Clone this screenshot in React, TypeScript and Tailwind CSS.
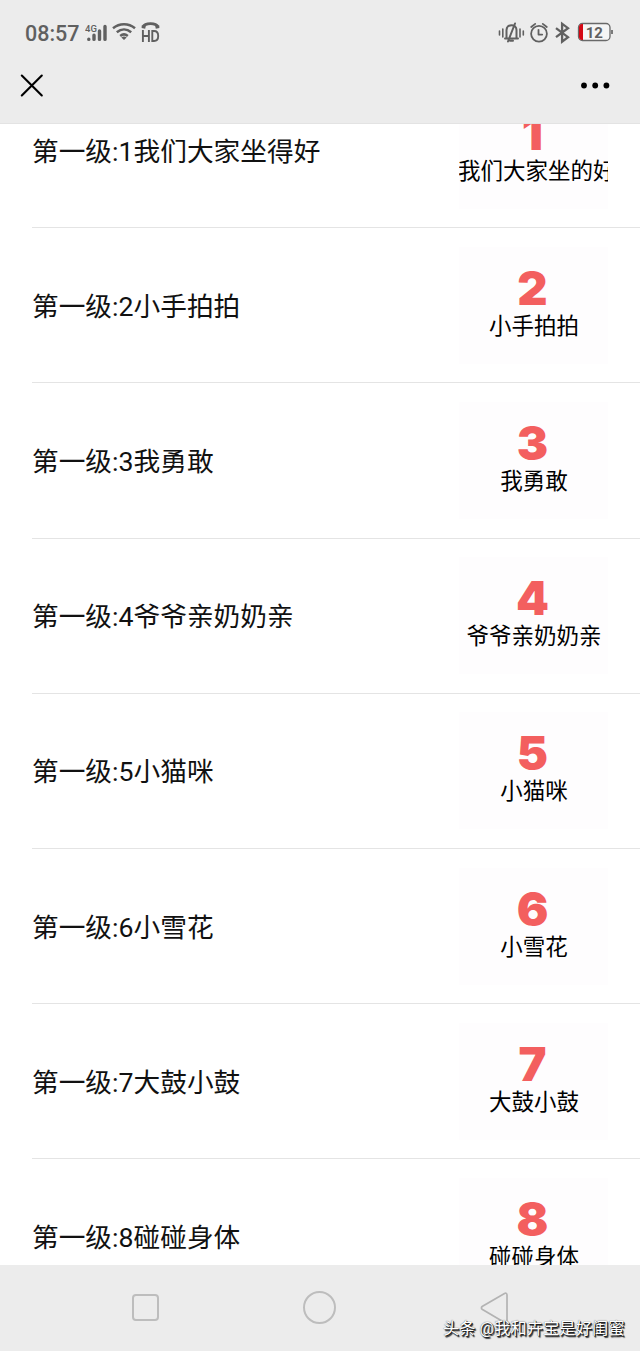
const lessons = [
  { title: '我们大家坐得好', cover: '我们大家坐的好' },
  { title: '小手拍拍', cover: '小手拍拍' },
  { title: '我勇敢', cover: '我勇敢' },
  { title: '爷爷亲奶奶亲', cover: '爷爷亲奶奶亲' },
  { title: '小猫咪', cover: '小猫咪' },
  { title: '小雪花', cover: '小雪花' },
  { title: '大鼓小鼓', cover: '大鼓小鼓' },
  { title: '碰碰身体', cover: '碰碰身体' },
];

function StatusBar() {
  return (
    <div className="flex h-[48px] items-start justify-between pt-[18px] pl-[25px] pr-[27px] text-[#606060]">
      <div className="flex h-[30px] items-center">
        <span className="w-[60px] whitespace-nowrap pt-[2px] font-['Roboto'] text-[21.5px] font-medium leading-[30px]">08:57</span>
        <svg width="76" height="30" viewBox="85 18 76 30" fill="none" stroke="currentColor">
          <text x="85" y="31.500" fontSize="9.500" fontWeight="500" fontFamily="Roboto" fill="currentColor" stroke="none">4G</text>
          <g strokeLinecap="round" strokeWidth="3.400">
            <path d="M88.800 39.300v.1M94 35.200v4.200M99.500 31v8.400M105 26.500v12.900" />
          </g>
          <g strokeWidth="2.500">
            <path d="M113 28.200c6.500-5.400 15.500-5.400 22 0M116.800 32.200c4.400-3.600 10-3.600 14.400 0M120.200 35.900c2.400-1.900 5.200-1.900 7.600 0" />
          </g>
          <path d="M121.300 37.500q2.700-1.800 5.400 0L124 40z" fill="currentColor" stroke="none" />
          <path d="M143 27c2-4.500 13-4.500 15 0" strokeWidth="2.800" />
          <path d="M141.800 25.200l4 .6-.6 2.900-3.600-.8zM159.200 25.200l-4 .6.6 2.900 3.600-.8z" fill="currentColor" stroke="none" />
          <path d="M142.900 30v12M148.900 30v12M142.900 36h6M152.300 31v10h1.700c3 0 4.200-2 4.200-5s-1.200-5-4.200-5z" strokeWidth="1.900" />
        </svg>
      </div>
      <div className="flex h-[30px] items-center">
        <svg width="76" height="30" viewBox="498 18 76 30" fill="none" stroke="currentColor" strokeWidth="1.800" strokeLinecap="round" strokeLinejoin="round">
          <path d="M499.500 31v4M502.800 29v8M520 29v8M523.300 31v4" strokeWidth="1.600" />
          <path d="M505 38.500h13M506.500 38.200V30c0-6.500 10-6.500 10 0v8.200M510 40.800h3M508 41.500l7-18" strokeWidth="2" />
          <circle cx="539" cy="33.700" r="7.900" />
          <path d="M538.500 29.800v4.800h3.700M531.200 27l4-3.100M546.800 27l-4-3.100" />
          <path d="M556 28.200l12 9-5.900 4.500V23.700l5.900 4.500-12 9" strokeLinejoin="miter" strokeLinecap="butt" strokeWidth="2.300" />
        </svg>
        <svg width="39" height="30" viewBox="574 18 39 30" fill="none">
          <rect x="578.500" y="23.500" width="31.500" height="17" rx="4" fill="#f5f5f5" stroke="#696969" strokeWidth="1.300" />
          <path d="M583 24h-1c-2 0-3 1.500-3 3v10c0 1.500 1 3 3 3h1z" fill="#d40814" />
          <path d="M612 30v4" stroke="#555" strokeWidth="1.500" />
          <text x="594.300" y="37.600" textAnchor="middle" fontSize="15" fontWeight="700" fontFamily="Roboto" fill="#606060">12</text>
        </svg>
      </div>
    </div>
  );
}

function TitleBar() {
  return (
    <div className="flex h-[76px] items-start justify-between pl-[20px] pr-[30px] pt-[26px]">
      <svg width="24" height="24" viewBox="0 0 24 24" stroke="#000" strokeWidth="2.100" strokeLinecap="round">
        <path d="M1.800 1.500l20 20M21.800 1.500l-20 20" />
      </svg>
      <svg width="30" height="24" viewBox="0 0 30 24" fill="#000">
        <circle cx="4" cy="11.500" r="2.900" />
        <circle cx="15.200" cy="11.500" r="2.900" />
        <circle cx="26.400" cy="11.500" r="2.900" />
      </svg>
    </div>
  );
}

export default function App() {
  return (
    <div className="flex h-[1351px] w-[640px] flex-col overflow-hidden bg-white font-['Roboto','Noto_Sans_CJK_SC',sans-serif]">
      <header className="h-[124px] shrink-0 border-b border-[#e3e3e3] bg-[#ececec]">
        <StatusBar />
        <TitleBar />
      </header>
      <main className="h-[1141px] shrink-0 overflow-hidden">
        <ul className="-mt-[51px] pl-[32px]">
          {lessons.map((lesson, i) => (
            <li key={lesson.title} className="flex h-[155.200px] items-center justify-between border-b border-[#e4e4e4] pr-[32px]">
              <span className="whitespace-nowrap pt-[3px] text-[26.700px] leading-[40px] text-[#111]">
                第一级:{i + 1}{lesson.title}
              </span>
              <div className="flex h-[117px] w-[149px] flex-col items-center overflow-hidden bg-[#fefdfe] pt-[22px]">
                <span className="h-[39px] pr-[2px] font-['Inter'] text-[47px] font-black leading-[38px] text-[#f35f5f]">{i + 1}</span>
                <span
                  className={
                    i === 0
                      ? '-ml-px self-start whitespace-nowrap text-[22.500px] leading-[36px] text-black'
                      : 'whitespace-nowrap pl-px text-[22.500px] leading-[36px] text-black'
                  }
                >
                  {lesson.cover}
                </span>
              </div>
            </li>
          ))}
        </ul>
      </main>
      <nav className="relative h-[86px] shrink-0 bg-[#ececec]">
        <div className="flex items-center justify-between pl-[132px] pr-[130px] pt-[26px]">
          <div className="h-[27px] w-[27px] rounded-[4px] border-2 border-[#bdbdbd]" />
          <div className="h-[33px] w-[33px] rounded-full border-2 border-[#bdbdbd]" />
          <svg width="30" height="32" viewBox="0 0 30 32" fill="none" stroke="#b3b3b3" strokeWidth="1.700">
            <path d="M2.500 14.300L24.500 1.500q2.500-1 2.500 1.500v26q0 2.500-2.500 1.500L2.500 17.500q-2.200-1.600 0-3.200z" />
          </svg>
        </div>
        <span className="absolute left-[443px] top-[52px] whitespace-nowrap text-[16.300px] leading-[24px] text-white [text-shadow:1px_1px_0_#222,1.500px_1.500px_1px_#333,0_0_1px_#333]">
          头条 @我和卉宝是好闺蜜
        </span>
      </nav>
    </div>
  );
}
